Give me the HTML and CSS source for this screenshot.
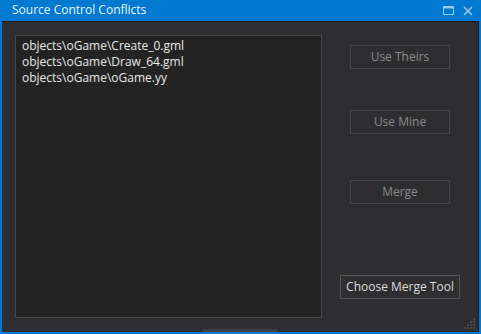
FILE: index.html
```html
<!DOCTYPE html>
<html lang="en">
<head>
  <meta charset="UTF-8">
  <title>Source Control Conflicts</title>
  <link rel="stylesheet" href="styles.css">
</head>
<body>
  <div class="window">
    <div class="titlebar">
      <span class="title">Source Control Conflicts</span>
      <div class="controls">
        <svg width="12" height="10" viewBox="0 0 12 10"><rect x="0.5" y="0.5" width="10" height="8" fill="none" stroke="#9cc9ee"/><rect x="0.5" y="0.5" width="10" height="2" fill="#9cc9ee"/></svg>
        <svg width="10" height="10" viewBox="0 0 10 10"><path d="M1 1 L9 9 M9 1 L1 9" stroke="#9cc9ee" stroke-width="1.5"/></svg>
      </div>
    </div>
    <div class="content">
      <div class="filelist">
        <div class="file">objects\oGame\Create_0.gml</div>
        <div class="file">objects\oGame\Draw_64.gml</div>
        <div class="file">objects\oGame\oGame.yy</div>
      </div>
      <div class="actions">
        <button class="btn disabled theirs">Use Theirs</button>
        <button class="btn disabled mine">Use Mine</button>
        <button class="btn disabled merge">Merge</button>
        <button class="btn tool">Choose Merge Tool</button>
      </div>
      <div class="grip-bar"></div>
      <svg class="grip" width="12" height="12" viewBox="0 0 12 12" fill="#4a4a4a">
        <rect x="9" y="0" width="2" height="2"/>
        <rect x="6" y="3" width="2" height="2"/><rect x="9" y="3" width="2" height="2"/>
        <rect x="3" y="6" width="2" height="2"/><rect x="6" y="6" width="2" height="2"/><rect x="9" y="6" width="2" height="2"/>
        <rect x="0" y="9" width="2" height="2"/><rect x="3" y="9" width="2" height="2"/><rect x="6" y="9" width="2" height="2"/><rect x="9" y="9" width="2" height="2"/>
      </svg>
    </div>
  </div>
</body>
</html>
```

FILE: styles.css
```css
body {
  margin: 0;
  font-family: 'Open Sans', sans-serif;
  font-size: 12px;
  background: #0079d1;
}
.window {
  width: 481px;
  height: 334px;
  box-sizing: border-box;
  background: #0079d1;
  border-left: 2px solid #0079d1;
  border-right: 2px solid #0079d1;
  border-bottom: 2px solid #0079d1;
  display: flex;
  flex-direction: column;
}
.titlebar {
  height: 21px;
  display: flex;
  align-items: center;
  justify-content: space-between;
  padding: 0 6px 0 10px;
  color: #eef5fc;
  font-size: 12px;
  border-bottom: 1px solid #1e1e1e;
}
.title {
  margin-top: -2px;
}
.controls {
  display: flex;
  gap: 8px;
  align-items: center;
}
.content {
  flex: 1;
  background: #2e2e30;
  border-right: 1px solid #1e1e1e;
  display: flex;
  position: relative;
}
.filelist {
  width: 307px;
  margin: 13px 0 14px 13px;
  background: #232323;
  border: 1px solid #474747;
  padding: 2px 0 0 6px;
  box-sizing: border-box;
  color: #e8e8e8;
}
.file {
  line-height: 16px;
}
.actions {
  flex: 1;
  display: flex;
  flex-direction: column;
  align-items: center;
}
.btn {
  font-family: 'Open Sans', sans-serif;
  font-size: 12px;
  background: transparent;
  border: 1px solid #474747;
  color: #ddd;
  height: 24px;
  padding: 0 0 2px;
}
.disabled {
  width: 100px;
  color: #8a8a8a;
}
.theirs { margin-top: 23px; }
.mine { margin-top: 41px; }
.merge { margin-top: 46px; }
.tool {
  width: 120px;
  margin-top: 71px;
  border-color: #555;
}
.grip-bar {
  position: absolute;
  left: 201px;
  bottom: 0;
  width: 74px;
  height: 3px;
  background: #3f3f4a;
}
.grip {
  position: absolute;
  right: 2px;
  bottom: 2px;
}
```
